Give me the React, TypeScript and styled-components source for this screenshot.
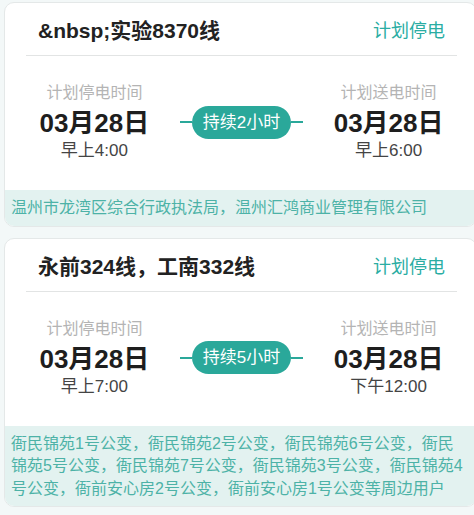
import styled, { createGlobalStyle } from "styled-components";

interface Outage {
  title: string;
  status: string;
  startDate: string;
  startTime: string;
  endDate: string;
  endTime: string;
  duration: string;
  area: string;
}

const outages: Outage[] = [
  {
    title: "&nbsp;实验8370线",
    status: "计划停电",
    startDate: "03月28日",
    startTime: "早上4:00",
    endDate: "03月28日",
    endTime: "早上6:00",
    duration: "持续2小时",
    area: "温州市龙湾区综合行政执法局，温州汇鸿商业管理有限公司",
  },
  {
    title: "永前324线，工南332线",
    status: "计划停电",
    startDate: "03月28日",
    startTime: "早上7:00",
    endDate: "03月28日",
    endTime: "下午12:00",
    duration: "持续5小时",
    area: "衙民锦苑1号公变，衙民锦苑2号公变，衙民锦苑6号公变，衙民锦苑5号公变，衙民锦苑7号公变，衙民锦苑3号公变，衙民锦苑4号公变，衙前安心房2号公变，衙前安心房1号公变等周边用户",
  },
];

export default function App() {
  return (
    <>
      <GlobalStyle />
      <List>
        {outages.map((o, i) => (
          <Card key={i}>
            <Header>
              <Title>{o.title}</Title>
              <Status>{o.status}</Status>
            </Header>
            <TimeRow>
              <TimeCol>
                <Label>计划停电时间</Label>
                <DateText>{o.startDate}</DateText>
                <Clock>{o.startTime}</Clock>
              </TimeCol>
              <Middle>
                <Line />
                <Badge>{o.duration}</Badge>
                <Line />
              </Middle>
              <TimeCol>
                <Label>计划送电时间</Label>
                <DateText>{o.endDate}</DateText>
                <Clock>{o.endTime}</Clock>
              </TimeCol>
            </TimeRow>
            <Footer>{o.area}</Footer>
          </Card>
        ))}
      </List>
    </>
  );
}

const GlobalStyle = createGlobalStyle`
  html, body {
    margin: 0;
    padding: 0;
    background: #f3f8f8;
    overflow: hidden;
  }
  body {
    font-family: "Liberation Sans", "Noto Sans CJK SC", sans-serif;
  }
`;

const List = styled.div`
  display: flex;
  flex-direction: column;
  gap: 11px;
  padding: 2px 0 0 4px;
  width: 473px;
`;

const Card = styled.div`
  background: #fff;
  border: 1px solid #e4e8e8;
  border-radius: 10px;
  overflow: hidden;
  box-sizing: border-box;
  width: 473px;
`;

const Header = styled.div`
  display: flex;
  align-items: center;
  justify-content: space-between;
  height: 52px;
  margin: 0 19px 0 21px;
  padding: 0 12px;
  border-bottom: 1px solid #e2e4e4;
`;

const Title = styled.div`
  font-size: 21px;
  font-weight: bold;
  color: #222;
`;

const Status = styled.div`
  font-size: 18px;
  color: #2aada3;
`;

const TimeRow = styled.div`
  display: grid;
  grid-template-columns: 1fr auto 1fr;
  align-items: center;
  padding: 26px 2px 28px 4px;
`;

const TimeCol = styled.div`
  display: flex;
  flex-direction: column;
  align-items: center;
`;

const Label = styled.div`
  font-size: 16px;
  line-height: 22px;
  color: #b4b4b4;
`;

const DateText = styled.div`
  font-size: 26px;
  line-height: 30px;
  font-weight: bold;
  color: #1e1e1e;
  margin-top: 4px;
`;

const Clock = styled.div`
  font-size: 17px;
  line-height: 22px;
  color: #444;
  margin-top: 2px;
`;

const Middle = styled.div`
  display: flex;
  align-items: center;
`;

const Line = styled.div`
  width: 12px;
  height: 2px;
  background: #2aa89a;
`;

const Badge = styled.div`
  height: 33px;
  line-height: 33px;
  padding: 0 11px;
  border-radius: 17px;
  background: #2aa89a;
  color: #fff;
  font-size: 17px;
`;

const Footer = styled.div`
  background: #e3f2f0;
  color: #4db2a7;
  font-size: 16px;
  line-height: 22.5px;
  padding: 7px 9px 6px 6px;
`;
